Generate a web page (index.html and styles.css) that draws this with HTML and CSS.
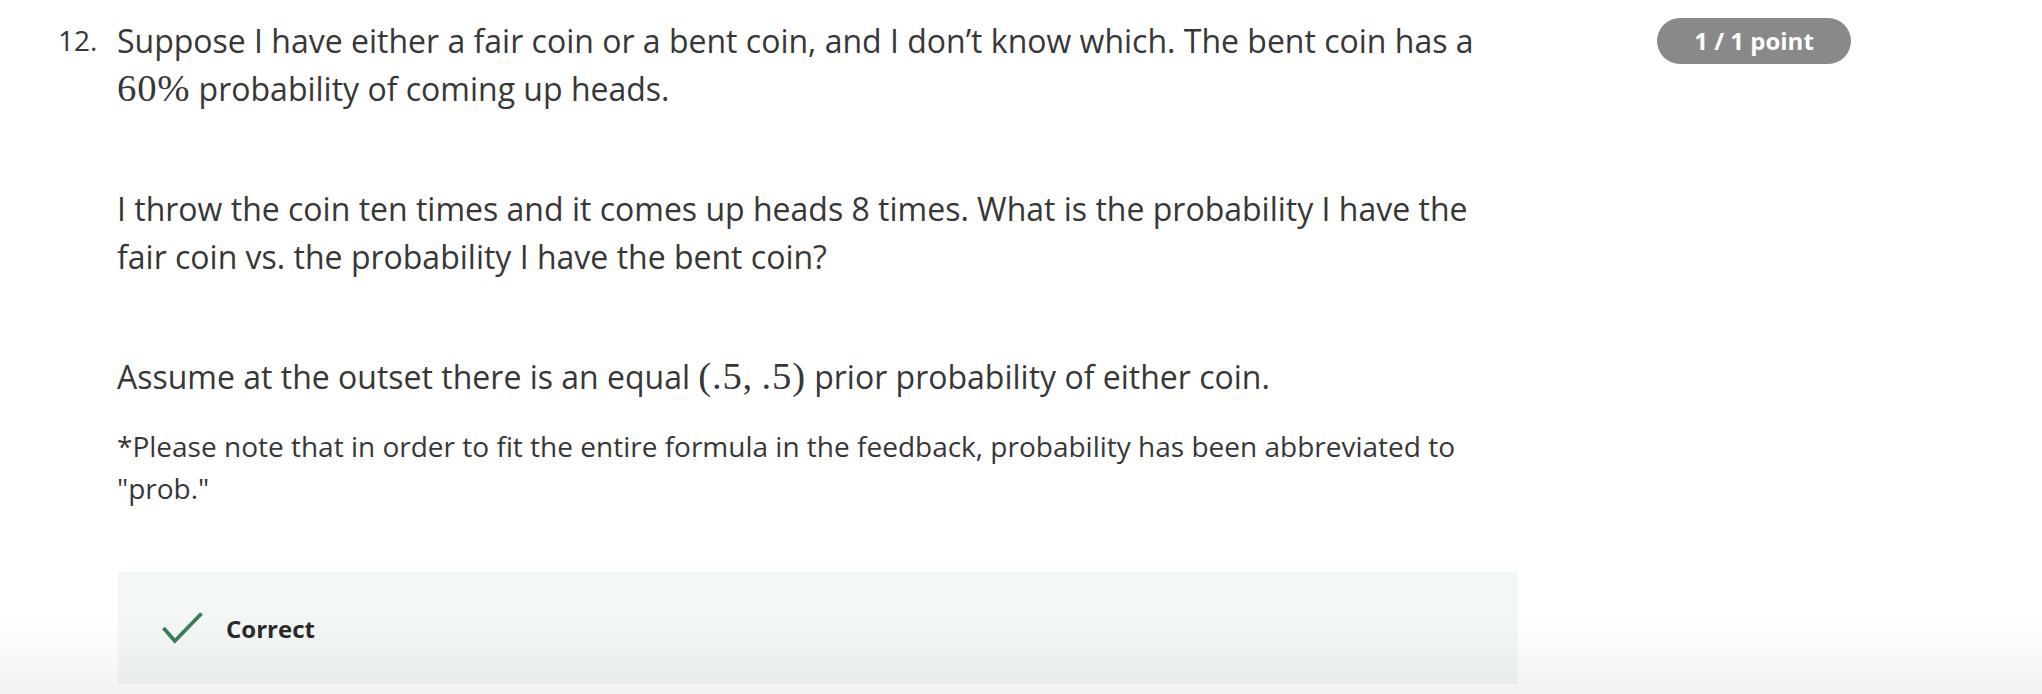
FILE: index.html
```html
<!DOCTYPE html>
<html lang="en">
<head>
<meta charset="utf-8">
<title>Question 12</title>
<link rel="stylesheet" href="styles.css">
</head>
<body>
<div class="question">
  <div class="num">12.</div>
  <div class="content">
    <p class="para">Suppose I have either a fair coin or a bent coin, and I don’t know which. The bent coin has a <span class="math">60%</span> probability of coming up heads.</p>
    <p class="para">I throw the coin ten times and it comes up heads 8 times. What is the probability I have the fair coin vs. the probability I have the bent coin?</p>
    <p class="para para-last">Assume at the outset there is an equal <span class="math">(.5,&#8201;.5)</span> prior probability of either coin.</p>
    <p class="note">*Please note that in order to fit the entire formula in the feedback, probability has been abbreviated to "prob."</p>
    <div class="feedback">
      <svg class="check" width="41" height="32" viewBox="0 0 41 32" aria-hidden="true">
        <path d="M1.5 16 L12.8 29 L39.5 1.5" fill="none" stroke="#3a7f58" stroke-width="3.8" stroke-linejoin="miter"/>
      </svg>
      <span class="feedback-text">Correct</span>
    </div>
  </div>
  <div class="badge">1 / 1 point</div>
</div>
<div class="bottom-fade"></div>
</body>
</html>
```

FILE: styles.css
```css
html, body {
  margin: 0;
  padding: 0;
  background: #ffffff;
}

body {
  font-family: "Open Sans", "Noto Sans", sans-serif;
  color: #373737;
}

.question {
  display: flex;
  align-items: flex-start;
  padding: 17px 0 0 58px;
}

.num {
  flex: none;
  width: 59px;
  font-size: 28px;
  line-height: 46px;
  color: #373737;
}

.content {
  flex: none;
  width: 1401px;
}

.para {
  margin: 0 0 72px 0;
  font-size: 32px;
  line-height: 48px;
}

.para-last {
  margin-bottom: 24px;
}

.math {
  font-family: "Liberation Serif", "Times New Roman", serif;
  font-size: 1.21em;
  line-height: 1;
  letter-spacing: 0.02em;
}

.note {
  margin: 0 0 63px 0;
  font-size: 28px;
  line-height: 42px;
}

.feedback {
  display: flex;
  align-items: center;
  height: 112px;
  box-sizing: border-box;
  margin-left: 1px;
  padding-left: 44px;
  background: #f3f8f6;
}

.check {
  flex: none;
  display: block;
}

.feedback-text {
  margin-left: 23px;
  font-size: 24px;
  font-weight: 700;
  color: #2b2b2b;
}

.badge {
  flex: none;
  margin-left: 139px;
  margin-top: 1px;
  width: 194px;
  height: 46px;
  border-radius: 23px;
  background: #898989;
  color: #ffffff;
  font-size: 24px;
  font-weight: 700;
  line-height: 46px;
  text-align: center;
}

.bottom-fade {
  position: fixed;
  left: 0;
  right: 0;
  bottom: 0;
  height: 80px;
  pointer-events: none;
  background: linear-gradient(to bottom, rgba(0, 0, 0, 0) 0%, rgba(0, 0, 0, 0.02) 45%, rgba(0, 0, 0, 0.055) 100%);
}
```
